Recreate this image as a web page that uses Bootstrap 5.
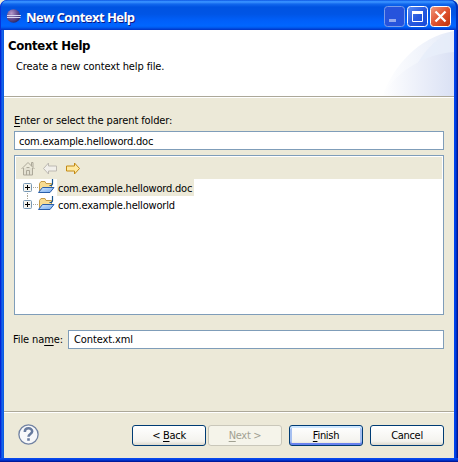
<!DOCTYPE html>
<html lang="en">
<head>
<meta charset="utf-8">
<title>New Context Help</title>
<link href="https://cdn.jsdelivr.net/npm/bootstrap@5.3.0/dist/css/bootstrap.min.css" rel="stylesheet">
<style>
body{width:458px;height:462px;overflow:hidden;background:#ece9d8;color:#000;font:11px/14px "DejaVu Sans Condensed","DejaVu Sans",sans-serif;letter-spacing:-.12px}
svg{display:block;flex:none}
u{text-underline-offset:2px;text-decoration-thickness:1px;text-decoration-skip-ink:none}
.window-frame{width:458px;height:462px;border-radius:7px 7px 0 0;background:linear-gradient(90deg,#0019cf 0,#0831d9 1px,#166aee 2px,#0855dd 4px,#0855dd 454px,#0046f0 454px,#003de0 456px,#001ea0 457px,#00138c 458px);padding:0 4px 4px;overflow:hidden;position:relative}
.title-bar{height:30px;margin:0 -4px;padding:3px 7px 0 6px;background:linear-gradient(#0848d8 0,#2b87ff 1px,#3c93ff 2px,#1268ee 4px,#0053e1 7px,#0055e5 14px,#0060fb 21px,#0066ff 26px,#0056e8 28px,#003dd7 29px,#0038c0 30px);border-radius:7px 7px 0 0;box-shadow:inset 1px 0 #0831d9,inset -2px 0 #0030b8}
.title-text{font:bold 13px/18px "Open Sans","Noto Sans",sans-serif;color:#fff;text-shadow:1px 1px #0a1883;margin-left:5px;letter-spacing:-.55px}
.title-keys{gap:2px}
.banner{height:66px;padding:8px 4px 0}
.banner-title{font-size:13px;line-height:15px;font-weight:bold;letter-spacing:-.3px}
.banner-note{padding-left:8px;margin-top:7px}
.rule{height:2px;background:#aca899;border-bottom:1px solid #fff;flex:none}
.page-body{height:313px;padding:16px 10px 0;background:#ece9d8}
.prompt{margin-bottom:3px}
.field{border:1px solid #7f9db9;background:#fff;height:19px;padding:1px 4px;line-height:18px;letter-spacing:-.2px}
.name-row{margin-top:15px}
.name-label{margin-left:-1px}
.name-field{width:376px;padding-left:5px;line-height:16px;letter-spacing:-.12px}
.tree-box{border:1px solid #7f9db9;background:#fff;height:160px;margin-top:5px;padding:1px}
.tree-tools{height:22px;background:#ece9d8;padding:3px 0 0 4px}
.tool-gap{margin-left:6px}
.tree-row{height:17px;padding-left:7px}
.row-label{padding:0 2px 0 1px;height:17px;line-height:19px;letter-spacing:-.2px}
.picked{background:#ece9d8}
.foot{height:45px;padding:12px 10px 0 14px;background:#ece9d8}
.help-mark{margin-top:-1px}
.xp{width:74px;height:21px;border:1px solid #003c74;border-radius:3px;background:linear-gradient(#fff,#f4f3ee 80%,#dcd8cc);padding:1px 0 0;color:#000;font:inherit;letter-spacing:-.3px;line-height:18px;flex:none}
.xp:disabled{opacity:1;border-color:#c9c7ba;background:#f5f4ea;color:#a1a192}
.xp-default{box-shadow:inset 0 2px #cee7ff,inset 0 -2px #6982ee,inset 2px 0 #a5bff0,inset -2px 0 #a5bff0}
.gap-next{margin-left:2px}
.gap-end{margin-left:7px}
.frame-foot{height:4px;margin:0 -4px;background:linear-gradient(#0b4df0 0,#003de0 2px,#0020a8 3px,#00138c)}
</style>
</head>
<body>
<main class="window-frame">
  <header class="title-bar d-flex align-items-center">
    <svg width="15" height="15" viewBox="0 0 15 15"><defs><radialGradient id="orb" cx=".35" cy=".3" r=".75"><stop offset="0" stop-color="#b79ac8"/><stop offset=".55" stop-color="#665092"/><stop offset="1" stop-color="#292664"/></radialGradient></defs><circle cx="7.5" cy="7" r="6.8" fill="url(#orb)"/><path d="M1 6.500h14M1 8.500h13.500" stroke="#d8d8f0"/></svg>
    <span class="title-text me-auto">New Context Help</span>
    <div class="title-keys d-flex">
      <svg width="21" height="21" viewBox="0 0 21 21"><defs><linearGradient id="bl" x2="1" y2="1"><stop stop-color="#5b8df5"/><stop offset=".5" stop-color="#2759df"/><stop offset="1" stop-color="#1748d8"/></linearGradient><linearGradient id="rd" x2="1" y2="1"><stop stop-color="#ef9a80"/><stop offset=".5" stop-color="#e15331"/><stop offset="1" stop-color="#bc3008"/></linearGradient></defs><rect x=".5" y=".5" width="20" height="20" rx="3" fill="#2653dc" stroke="#799be9"/><path d="M5 13h7v3H5z" fill="#93a8ed"/></svg>
      <svg width="21" height="21" viewBox="0 0 21 21"><rect x=".5" y=".5" width="20" height="20" rx="3" fill="url(#bl)" stroke="#fff"/><path d="M5.500 6v9.500h10V6" fill="none" stroke="#fff"/><path d="M5 5h11v3H5z" fill="#fff"/></svg>
      <svg width="21" height="21" viewBox="0 0 21 21"><rect x=".5" y=".5" width="20" height="20" rx="3" fill="url(#rd)" stroke="#fff"/><path d="M5.500 5.500l10 10M15.500 5.500l-10 10" stroke="#fff" stroke-width="2.300"/></svg>
    </div>
  </header>
  <section class="banner bg-white position-relative">
    <div class="banner-title">Context Help</div>
    <div class="banner-note">Create a new context help file.</div>
    <svg class="position-absolute top-0 end-0" width="74" height="66" viewBox="0 0 74 66"><defs><linearGradient id="w1"><stop stop-color="#fff"/><stop offset="1" stop-color="#e5ebf8"/></linearGradient><linearGradient id="w2"><stop stop-color="#fff"/><stop offset="1" stop-color="#dae1f4"/></linearGradient></defs><path d="M2 66C14 36 38 7 74 1v65z" fill="url(#w1)"/><path d="M34 40C42 24 54 8 74 1v34z" fill="#e6ecf9" opacity=".7"/><path d="M2 66C16 42 44 24 74 22v44z" fill="url(#w2)"/></svg>
  </section>
  <div class="rule"></div>
  <section class="page-body">
    <div class="prompt"><u>E</u>nter or select the parent folder:</div>
    <div class="field">com.example.helloword.doc</div>
    <div class="tree-box">
      <div class="tree-tools d-flex">
        <svg width="16" height="16" viewBox="0 0 16 16"><path d="M3 8h9v7H3z" fill="#e3e0d1"/><path d="M3.500 8v7h9V8M1.500 9l6.500-6.500L14.500 9M11.500 6V2.500h1.500V7M6.500 15V10.500h3V15M6.500 7.500h3" fill="none" stroke="#aca899"/></svg>
        <svg class="tool-gap" width="16" height="16" viewBox="0 0 16 16"><path d="M1.500 8.500l5-5.500v3h8v5h-8v3z" fill="#f1efea" stroke="#bdb9b2"/></svg>
        <svg class="tool-gap" width="16" height="16" viewBox="0 0 16 16"><path d="M15.500 8.500l-5-5.500v3h-8v5h8v3z" fill="#ffe9a0" stroke="#c38a15"/></svg>
      </div>
      <div class="tree-row d-flex">
        <svg width="34" height="17" viewBox="0 0 34 17"><use href="#node"/><path d="M4.500 14v3" stroke="#aca899" stroke-dasharray="1 1"/></svg>
        <span class="row-label picked">com.example.helloword.doc</span>
      </div>
      <div class="tree-row d-flex">
        <svg width="34" height="17" viewBox="0 0 34 17"><defs><linearGradient id="fb" y2="1"><stop stop-color="#d5eaff"/><stop offset="1" stop-color="#6fa5ec"/></linearGradient><g id="node"><rect x=".5" y="4.500" width="8" height="8" rx="1" fill="#f5f4ee" stroke="#7898b5"/><path d="M2 8.500h5M4.500 6v5" stroke="#000"/><path d="M10 8.500h5" stroke="#aca899" stroke-dasharray="1 1"/><path d="M16.500 12V4.500l1.500-2h4l1 2h5.500V8" fill="#f8dc91" stroke="#c49a47"/><path d="M19.500 8.500h11.500l-4 5H15.500z" fill="url(#fb)" stroke="#2a5faa"/><path d="M29.500 0v5l-1 1.500H26.500" fill="none" stroke="#17558f" stroke-width="1.200"/></g></defs><path d="M4.500 0v4" stroke="#aca899" stroke-dasharray="1 1"/><use href="#node"/></svg>
        <span class="row-label">com.example.helloworld</span>
      </div>
    </div>
    <div class="name-row d-flex align-items-center">
      <span class="name-label flex-shrink-0 text-nowrap me-auto">File na<u>m</u>e:</span>
      <div class="field name-field">Context.xml</div>
    </div>
  </section>
  <div class="rule"></div>
  <footer class="foot d-flex">
    <svg class="help-mark me-auto" width="21" height="21" viewBox="0 0 21 21"><circle cx="10.500" cy="10.500" r="9.600" fill="#f7f8fa" stroke="#7182a2" stroke-width="1.300"/><path d="M6.800 8c0-5 7.600-4.500 7.400-.6-.1 2.600-3.700 2.500-3.700 5.300" fill="none" stroke="#687b9e" stroke-width="2.500"/><path d="M9.200 14.200h2.600v2.500H9.200z" fill="#687b9e"/></svg>
    <button class="xp">&lt; <u>B</u>ack</button>
    <button class="xp gap-next" disabled><u>N</u>ext &gt;</button>
    <button class="xp xp-default gap-end"><u>F</u>inish</button>
    <button class="xp gap-end">Cancel</button>
  </footer>
  <div class="frame-foot"></div>
</main>
<script src="https://cdn.jsdelivr.net/npm/bootstrap@5.3.0/dist/js/bootstrap.bundle.min.js"></script>
</body>
</html>
